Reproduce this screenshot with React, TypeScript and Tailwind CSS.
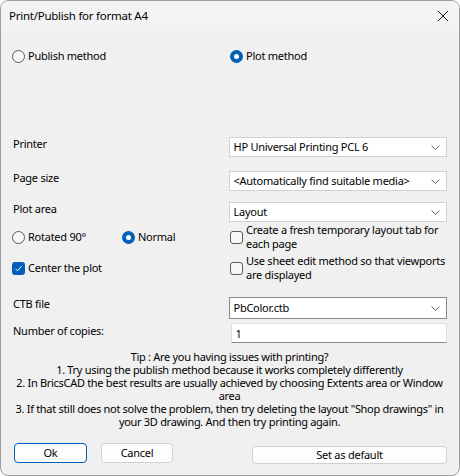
import React, { useState } from 'react';

const font = { fontFamily: '"Noto Sans", "Liberation Sans", sans-serif' };

const Radio: React.FC<{ checked: boolean; label: string; onClick: () => void }> = ({ checked, label, onClick }) => (
  <button onClick={onClick} className="flex items-center gap-[3px] text-black whitespace-nowrap">
    {checked ? (
      <span className="shrink-0 w-[13px] h-[13px] rounded-full bg-[#005fb8] flex items-center justify-center">
        <span className="w-[5px] h-[5px] rounded-full bg-white" />
      </span>
    ) : (
      <span className="shrink-0 w-[13px] h-[13px] rounded-full border border-[#5a5a5a] bg-[#f7f7f7]" />
    )}
    <span>{label}</span>
  </button>
);

const Check: React.FC<{ checked: boolean; onClick: () => void; children: React.ReactNode }> = ({ checked, onClick, children }) => (
  <button onClick={onClick} className="flex items-center gap-[3px] text-left text-black leading-[14px] whitespace-nowrap">
    {checked ? (
      <span className="shrink-0 w-[13px] h-[13px] rounded-[3px] bg-[#005fb8] flex items-center justify-center">
        <svg width="9" height="9" viewBox="0 0 9 9">
          <path d="M1.5 4.8 L3.5 6.8 L7.5 2.2" fill="none" stroke="white" strokeWidth="1" />
        </svg>
      </span>
    ) : (
      <span className="shrink-0 w-[13px] h-[13px] rounded-[3px] border border-[#5a5a5a] bg-[#f7f7f7]" />
    )}
    <span>{children}</span>
  </button>
);

const Combo: React.FC<{ value: string; tall?: boolean }> = ({ value, tall }) => (
  <div
    className={`w-[218px] ${tall ? 'h-[22px] border-[#8a8a8a]' : 'h-[20px] border-[#d0d0d0]'} border bg-white flex items-center justify-between pl-[3px] pr-[6px]`}
  >
    <span className="whitespace-nowrap">{value}</span>
    <svg width="9" height="5" viewBox="0 0 9 5">
      <path d="M0.5 0.5 L4.5 4.5 L8.5 0.5" fill="none" stroke="#6a6a6a" strokeWidth="1" />
    </svg>
  </div>
);

export default function App() {
  const [method, setMethod] = useState<'publish' | 'plot'>('plot');
  const [rotation, setRotation] = useState<'rotated' | 'normal'>('normal');
  const [freshTab, setFreshTab] = useState(false);
  const [center, setCenter] = useState(true);
  const [sheetEdit, setSheetEdit] = useState(false);
  const [copies, setCopies] = useState('1');

  return (
    <div style={font} className="w-[460px] h-[476px] text-[11px] leading-[14px] tracking-[-0.25px] text-black">
      <div className="w-full h-full border border-[#a0a0a0] rounded-[8px] bg-[#f0f0f0] overflow-hidden flex flex-col">
        {/* Title bar */}
        <div className="h-[30px] bg-[#f3f3f3] flex items-center justify-between pl-[8px] pr-[10px] shrink-0">
          <span className="text-[11.5px]">Print/Publish for format A4</span>
          <svg width="12" height="12" viewBox="0 0 12 12">
            <path d="M1 1 L11 11 M11 1 L1 11" stroke="#1a1a1a" strokeWidth="1" />
          </svg>
        </div>

        <div className="pl-[11px] pr-[12px] flex flex-col">
          {/* Method */}
          <div className="mt-[17px] flex h-[16px] items-center">
            <div className="w-[218px]">
              <Radio checked={method === 'publish'} label="Publish method" onClick={() => setMethod('publish')} />
            </div>
            <Radio checked={method === 'plot'} label="Plot method" onClick={() => setMethod('plot')} />
          </div>

          {/* Printer */}
          <div className="mt-[73px] flex items-start">
            <div className="w-[218px] pl-[1px]">Printer</div>
            <Combo value="HP Universal Printing PCL 6" />
          </div>

          <div className="mt-[14px] flex items-start">
            <div className="w-[218px] pl-[1px]">Page size</div>
            <Combo value="<Automatically find suitable media>" />
          </div>

          <div className="mt-[11px] flex items-start">
            <div className="w-[218px] pl-[1px]">Plot area</div>
            <Combo value="Layout" />
          </div>

          <div className="mt-[1px] h-[28px] flex items-center">
            <div className="w-[218px] flex items-center">
              <div className="w-[110px]">
                <Radio checked={rotation === 'rotated'} label="Rotated 90°" onClick={() => setRotation('rotated')} />
              </div>
              <Radio checked={rotation === 'normal'} label="Normal" onClick={() => setRotation('normal')} />
            </div>
            <Check checked={freshTab} onClick={() => setFreshTab(!freshTab)}>
              Create a fresh temporary layout tab for
              <br />
              each page
            </Check>
          </div>

          <div className="mt-[3px] h-[28px] flex items-center">
            <div className="w-[218px]">
              <Check checked={center} onClick={() => setCenter(!center)}>
                Center the plot
              </Check>
            </div>
            <Check checked={sheetEdit} onClick={() => setSheetEdit(!sheetEdit)}>
              Use sheet edit method so that viewports
              <br />
              are displayed
            </Check>
          </div>

          <div className="mt-[15px] flex items-start">
            <div className="w-[218px] pl-[1px]">CTB file</div>
            <Combo value="PbColor.ctb" tall />
          </div>

          <div className="mt-[4px] flex items-start">
            <div className="w-[218px] pl-[1px] pt-[1px]">Number of copies:</div>
            <input
              value={copies}
              onChange={(e) => setCopies(e.target.value)}
              className="w-[217px] h-[20px] ml-[1px] bg-white border border-[#e0e0e0] border-b-[#8a8a8a] pl-[4px] outline-none"
            />
          </div>

          {/* Tip */}
          <div className="mt-[7px] flex flex-col items-center leading-[13px] whitespace-nowrap tracking-[-0.3px]">
            <div>Tip : Are you having issues with printing?</div>
            <div>1. Try using the publish method because it works completely differently</div>
            <div>2. In BricsCAD the best results are usually achieved by choosing Extents area or Window</div>
            <div>area</div>
            <div>3. If that still does not solve the problem, then try deleting the layout "Shop drawings" in</div>
            <div>your 3D drawing. And then try printing again.</div>
          </div>

          {/* Buttons */}
          <div className="mt-[15px] flex items-start">
            <button className="ml-[2px] w-[73px] h-[20px] rounded-[4px] border border-[#005fb8] bg-[#fdfdfd]">Ok</button>
            <button className="ml-[14px] w-[72px] h-[20px] rounded-[4px] border border-[#d0d0d0] bg-[#fdfdfd]">Cancel</button>
            <button className="ml-[79px] mt-[3px] w-[195px] h-[18px] rounded-[4px] border border-[#d0d0d0] bg-[#fdfdfd]">
              Set as default
            </button>
          </div>
        </div>
      </div>
    </div>
  );
}
